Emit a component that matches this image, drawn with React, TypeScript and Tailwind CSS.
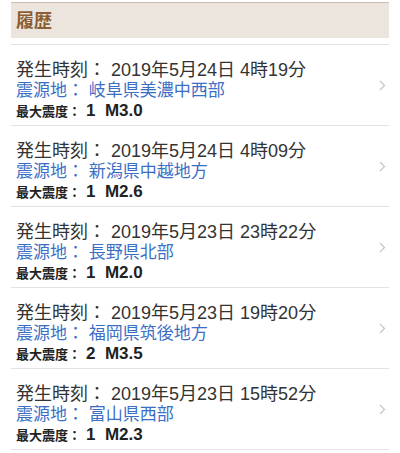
const items = [
  { time: '2019年5月24日 4時19分', place: '岐阜県美濃中西部', shindo: '1', mag: 'M3.0' },
  { time: '2019年5月24日 4時09分', place: '新潟県中越地方', shindo: '1', mag: 'M2.6' },
  { time: '2019年5月23日 23時22分', place: '長野県北部', shindo: '1', mag: 'M2.0' },
  { time: '2019年5月23日 19時20分', place: '福岡県筑後地方', shindo: '2', mag: 'M3.5' },
  { time: '2019年5月23日 15時52分', place: '富山県西部', shindo: '1', mag: 'M2.3' },
]

const font = { fontFamily: '"Liberation Sans", "Noto Sans CJK JP", sans-serif' }

function Chevron() {
  return (
    <svg width="7" height="11" viewBox="0 0 7 11" fill="none" className="shrink-0">
      <path d="M1 1l4.5 4.5L1 10" stroke="#c4c4c8" strokeWidth="1.2" />
    </svg>
  )
}

export default function App() {
  return (
    <div className="min-h-screen bg-white px-[11px] pt-[2px]" style={font}>
      <div className="h-[36px] border-t border-[#c9bcae] bg-[#ece5dd] flex items-center pl-[5px]">
        <h1 className="text-[18px] font-bold text-[#8b5e34] leading-none">履歴</h1>
      </div>

      <ul className="mt-[6px] border-t border-[#e3e3e3]">
        {items.map((it) => (
          <li key={it.time} className="h-[81px] border-b border-[#e3e3e3] flex items-center pl-[5px] pr-[3px]">
            <div className="flex-1 self-start pt-[15px] flex flex-col">
              <div className="h-[21px] text-[18px] leading-[21px] text-[#333]">
                発生時刻： {it.time}
              </div>
              <div className="h-[20px] text-[17px] leading-[20px] text-[#3b6fc6]">
                震源地： {it.place}
              </div>
              <div className="h-[19px] flex items-baseline text-[#222] font-bold">
                <span className="text-[13px] leading-[19px]">最大震度：</span>
                <span className="text-[17px] leading-[19px] ml-[5px]">{it.shindo}&nbsp;&nbsp;{it.mag}</span>
              </div>
            </div>
            <Chevron />
          </li>
        ))}
      </ul>
    </div>
  )
}
